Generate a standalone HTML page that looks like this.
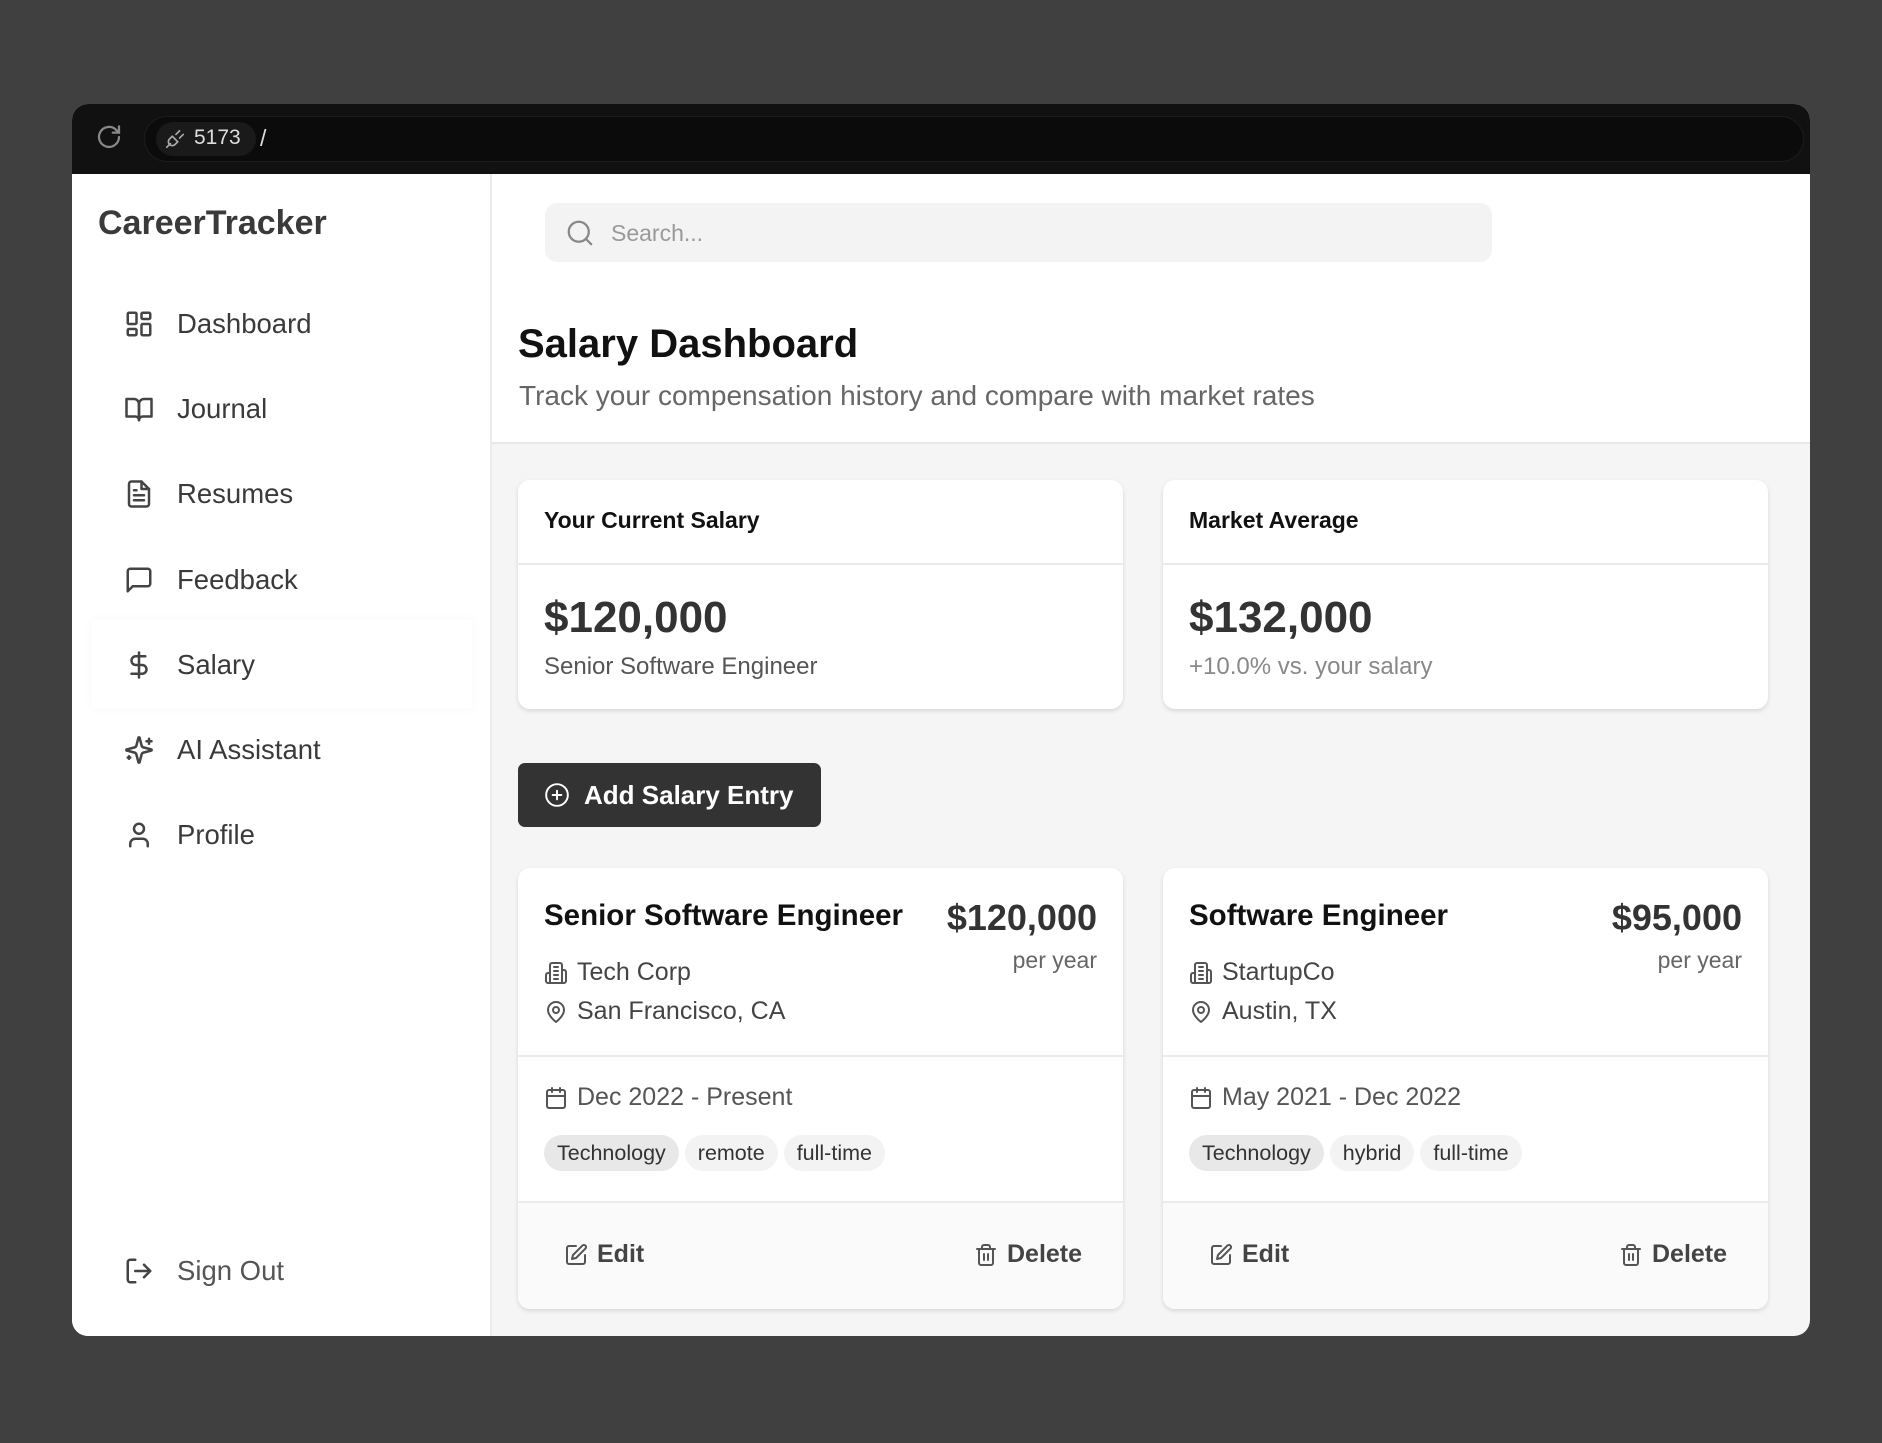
<!DOCTYPE html>
<html><head><meta charset="utf-8"><style>
*{box-sizing:border-box;margin:0;padding:0}
body{width:1882px;height:1443px;background:#404040;font-family:"Liberation Sans",sans-serif;position:relative;overflow:hidden;color:#333}
.abs{position:absolute}
.win{left:72px;top:104px;width:1738px;height:1232px;border-radius:16px;overflow:hidden;background:#f5f5f5}
.bar{left:0;top:0;width:1738px;height:70px;background:#111}
.side{left:0;top:70px;width:420px;height:1162px;background:#fff;border-right:2px solid #ebebeb}
.nav{position:absolute;left:52px;height:40px;display:flex;align-items:center;font-size:27.5px;color:#3a3a3a}
.nav svg{width:30px;height:30px;margin-right:23px;fill:none;stroke:#444;stroke-width:2;stroke-linecap:round;stroke-linejoin:round}
.card{position:absolute;background:#fff;border-radius:12px;box-shadow:0 2px 5px rgba(0,0,0,.12);overflow:hidden}
.ic{fill:none;stroke:#555;stroke-width:2;stroke-linecap:round;stroke-linejoin:round}
.tag{display:inline-block;height:36px;line-height:36px;padding:0 13px;border-radius:18px;background:#f3f3f3;font-size:21.5px;color:#333;margin-right:6px}
.row{display:flex;align-items:center;font-size:25px;color:#444;position:absolute;left:26px}
.row svg{width:24px;height:24px;margin-right:9px}
</style></head><body>
<div class="abs win">
 <div class="abs bar">
  <svg class="abs" style="left:22px;top:18px" width="30" height="30" viewBox="0 0 24 24" fill="none" stroke="#888" stroke-width="1.8" stroke-linecap="round"><path d="M20 12a8 8 0 1 1-2.3-5.7L20 8.5"/><path d="M20 3.5v5h-5"/></svg>
  <div class="abs" style="left:72px;top:12px;width:1660px;height:46px;border-radius:23px;background:#0b0b0b;border:1px solid #1c1c1c"></div>
  <div class="abs" style="left:84px;top:18px;width:100px;height:34px;border-radius:17px;background:#1a1a1a"></div>
  <svg class="abs" style="left:92px;top:24px" width="22" height="22" viewBox="0 0 24 24" fill="none" stroke="#aaa" stroke-width="1.8" stroke-linecap="round"><path d="M3 21l4-4M17 3l-4 4M21 7l-4 4M9 9l6 6-3 3a4 4 0 0 1-6-6z"/></svg>
  <div class="abs" style="left:122px;top:22px;font-size:21px;color:#ddd">5173</div>
  <div class="abs" style="left:188px;top:21px;font-size:23px;color:#ddd">/</div>
 </div>
 <div class="abs side">
  <div class="abs" style="left:26px;top:30px;font-size:34px;font-weight:bold;color:#3a3a3a">CareerTracker</div>
  <div class="nav" style="top:130px"><svg viewBox="0 0 24 24"><rect x="3" y="3" width="7" height="9" rx="1"/><rect x="14" y="3" width="7" height="5" rx="1"/><rect x="14" y="12" width="7" height="9" rx="1"/><rect x="3" y="16" width="7" height="5" rx="1"/></svg>Dashboard</div>
  <div class="nav" style="top:215px"><svg viewBox="0 0 24 24"><path d="M2 4h6a4 4 0 0 1 4 4v13a3 3 0 0 0-3-3H2z"/><path d="M22 4h-6a4 4 0 0 0-4 4v13a3 3 0 0 1 3-3h7z"/></svg>Journal</div>
  <div class="nav" style="top:300px"><svg viewBox="0 0 24 24"><path d="M14 2H6a2 2 0 0 0-2 2v16a2 2 0 0 0 2 2h12a2 2 0 0 0 2-2V8z"/><path d="M14 2v6h6M8 13h8M8 17h8M8 9h2"/></svg>Resumes</div>
  <div class="nav" style="top:386px"><svg viewBox="0 0 24 24"><path d="M21 15a2 2 0 0 1-2 2H7l-4 4V5a2 2 0 0 1 2-2h14a2 2 0 0 1 2 2z"/></svg>Feedback</div>
  <div class="abs" style="left:20px;top:446px;width:380px;height:88px;background:#fff;box-shadow:0 0 12px rgba(0,0,0,.03)"></div>
  <div class="nav" style="top:471px"><svg viewBox="0 0 24 24"><path d="M12 2v20M17 5H9.5a3.5 3.5 0 0 0 0 7h5a3.5 3.5 0 0 1 0 7H6"/></svg>Salary</div>
  <div class="nav" style="top:556px"><svg viewBox="0 0 24 24"><path d="M9.9 15.5A2 2 0 0 0 8.5 14.1L2.4 12.5a.5.5 0 0 1 0-1l6.1-1.6A2 2 0 0 0 9.9 8.5L11.5 2.4a.5.5 0 0 1 1 0l1.6 6.1a2 2 0 0 0 1.4 1.4l6.1 1.6a.5.5 0 0 1 0 1l-6.1 1.6a2 2 0 0 0-1.4 1.4l-1.6 6.1a.5.5 0 0 1-1 0z"/><path d="M20 3v4M22 5h-4M4 17v2M5 18H3"/></svg>AI Assistant</div>
  <div class="nav" style="top:641px"><svg viewBox="0 0 24 24"><circle cx="12" cy="7" r="4"/><path d="M19 21v-2a4 4 0 0 0-4-4H9a4 4 0 0 0-4 4v2"/></svg>Profile</div>
  <div class="nav" style="top:1077px;color:#555"><svg viewBox="0 0 24 24"><path d="M9 21H5a2 2 0 0 1-2-2V5a2 2 0 0 1 2-2h4M16 17l5-5-5-5M21 12H9"/></svg>Sign Out</div>
 </div>
 <div class="abs" style="left:420px;top:70px;width:1318px;height:270px;background:#fff;border-bottom:2px solid #e8e8e8"></div>
 <div class="abs" style="left:473px;top:99px;width:947px;height:59px;border-radius:12px;background:#f3f3f3"></div>
 <svg class="abs" style="left:493px;top:114px" width="30" height="30" viewBox="0 0 24 24" fill="none" stroke="#888" stroke-width="1.8" stroke-linecap="round"><circle cx="11" cy="11" r="8"/><path d="M21 21l-4.3-4.3"/></svg>
 <div class="abs" style="left:539px;top:116px;font-size:23px;color:#999">Search...</div>
 <div class="abs" style="left:446px;top:218px;font-size:40px;font-weight:bold;color:#111">Salary Dashboard</div>
 <div class="abs" style="left:447px;top:276px;font-size:28px;color:#666">Track your compensation history and compare with market rates</div>
 <div class="card" style="left:446px;top:376px;width:605px;height:229px">
  <div style="height:85px;border-bottom:2px solid #ebebeb;padding:27px 26px 0;font-size:23px;font-weight:bold;color:#111">Your Current Salary</div>
  <div style="padding:28px 26px 0;font-size:44px;font-weight:bold;color:#333">$120,000</div>
  <div style="padding:10px 26px 0;font-size:24px;color:#555">Senior Software Engineer</div>
 </div>
 <div class="card" style="left:1091px;top:376px;width:605px;height:229px">
  <div style="height:85px;border-bottom:2px solid #ebebeb;padding:27px 26px 0;font-size:23px;font-weight:bold;color:#111">Market Average</div>
  <div style="padding:28px 26px 0;font-size:44px;font-weight:bold;color:#333">$132,000</div>
  <div style="padding:10px 26px 0;font-size:24px;color:#888">+10.0% vs. your salary</div>
 </div>
 <div class="abs" style="left:446px;top:659px;width:303px;height:64px;border-radius:7px;background:#333;color:#fff;font-size:26px;font-weight:bold;display:flex;align-items:center;padding-left:26px">
  <svg width="26" height="26" viewBox="0 0 24 24" fill="none" stroke="#fff" stroke-width="1.8" stroke-linecap="round" style="margin-right:14px"><circle cx="12" cy="12" r="10"/><path d="M12 8v8M8 12h8"/></svg>Add Salary Entry</div>
 <div class="card" style="left:446px;top:764px;width:605px;height:441px">
  <div class="abs" style="left:26px;top:31px;font-size:29.5px;font-weight:bold;color:#111">Senior Software Engineer</div>
  <div class="abs" style="right:26px;top:29px;font-size:36px;font-weight:bold;color:#333">$120,000</div>
  <div class="abs" style="right:26px;top:79px;font-size:23px;color:#666">per year</div>
  <div class="row" style="top:90px"><svg class="ic" viewBox="0 0 24 24"><path d="M6 22V4a2 2 0 0 1 2-2h8a2 2 0 0 1 2 2v18zM6 12H4a2 2 0 0 0-2 2v6a2 2 0 0 0 2 2h2M18 9h2a2 2 0 0 1 2 2v9a2 2 0 0 1-2 2h-2M10 6h4M10 10h4M10 14h4M10 18h4"/></svg>Tech Corp</div>
  <div class="row" style="top:129px"><svg class="ic" viewBox="0 0 24 24"><path d="M20 10c0 6-8 12-8 12s-8-6-8-12a8 8 0 0 1 16 0z"/><circle cx="12" cy="10" r="3"/></svg>San Francisco, CA</div>
  <div class="abs" style="left:0;top:187px;width:100%;border-top:2px solid #ebebeb"></div>
  <div class="row" style="top:215px;color:#555"><svg class="ic" viewBox="0 0 24 24"><rect x="3" y="4" width="18" height="18" rx="2"/><path d="M16 2v4M8 2v4M3 10h18"/></svg>Dec 2022 - Present</div>
  <div class="abs" style="left:26px;top:267px"><span class="tag" style="background:#e8e8e8">Technology</span><span class="tag">remote</span><span class="tag">full-time</span></div>
  <div class="abs" style="left:0;top:333px;width:100%;height:108px;background:#fafafa;border-top:2px solid #ebebeb"></div>
  <div class="row" style="left:46px;top:372px;font-weight:bold;color:#444"><svg class="ic" viewBox="0 0 24 24"><path d="M12 3H5a2 2 0 0 0-2 2v14a2 2 0 0 0 2 2h14a2 2 0 0 0 2-2v-7"/><path d="M18.4 2.6a2.1 2.1 0 1 1 3 3L12 15l-4 1 1-4z"/></svg>Edit</div>
  <div class="row" style="left:456px;top:372px;font-weight:bold;color:#444"><svg class="ic" viewBox="0 0 24 24"><path d="M3 6h18M19 6v14a2 2 0 0 1-2 2H7a2 2 0 0 1-2-2V6M8 6V4a2 2 0 0 1 2-2h4a2 2 0 0 1 2 2v2M10 11v6M14 11v6"/></svg>Delete</div>
 </div>
 <div class="card" style="left:1091px;top:764px;width:605px;height:441px">
  <div class="abs" style="left:26px;top:31px;font-size:29.5px;font-weight:bold;color:#111">Software Engineer</div>
  <div class="abs" style="right:26px;top:29px;font-size:36px;font-weight:bold;color:#333">$95,000</div>
  <div class="abs" style="right:26px;top:79px;font-size:23px;color:#666">per year</div>
  <div class="row" style="top:90px"><svg class="ic" viewBox="0 0 24 24"><path d="M6 22V4a2 2 0 0 1 2-2h8a2 2 0 0 1 2 2v18zM6 12H4a2 2 0 0 0-2 2v6a2 2 0 0 0 2 2h2M18 9h2a2 2 0 0 1 2 2v9a2 2 0 0 1-2 2h-2M10 6h4M10 10h4M10 14h4M10 18h4"/></svg>StartupCo</div>
  <div class="row" style="top:129px"><svg class="ic" viewBox="0 0 24 24"><path d="M20 10c0 6-8 12-8 12s-8-6-8-12a8 8 0 0 1 16 0z"/><circle cx="12" cy="10" r="3"/></svg>Austin, TX</div>
  <div class="abs" style="left:0;top:187px;width:100%;border-top:2px solid #ebebeb"></div>
  <div class="row" style="top:215px;color:#555"><svg class="ic" viewBox="0 0 24 24"><rect x="3" y="4" width="18" height="18" rx="2"/><path d="M16 2v4M8 2v4M3 10h18"/></svg>May 2021 - Dec 2022</div>
  <div class="abs" style="left:26px;top:267px"><span class="tag" style="background:#e8e8e8">Technology</span><span class="tag">hybrid</span><span class="tag">full-time</span></div>
  <div class="abs" style="left:0;top:333px;width:100%;height:108px;background:#fafafa;border-top:2px solid #ebebeb"></div>
  <div class="row" style="left:46px;top:372px;font-weight:bold;color:#444"><svg class="ic" viewBox="0 0 24 24"><path d="M12 3H5a2 2 0 0 0-2 2v14a2 2 0 0 0 2 2h14a2 2 0 0 0 2-2v-7"/><path d="M18.4 2.6a2.1 2.1 0 1 1 3 3L12 15l-4 1 1-4z"/></svg>Edit</div>
  <div class="row" style="left:456px;top:372px;font-weight:bold;color:#444"><svg class="ic" viewBox="0 0 24 24"><path d="M3 6h18M19 6v14a2 2 0 0 1-2 2H7a2 2 0 0 1-2-2V6M8 6V4a2 2 0 0 1 2-2h4a2 2 0 0 1 2 2v2M10 11v6M14 11v6"/></svg>Delete</div>
 </div>
</div>
</body></html>
